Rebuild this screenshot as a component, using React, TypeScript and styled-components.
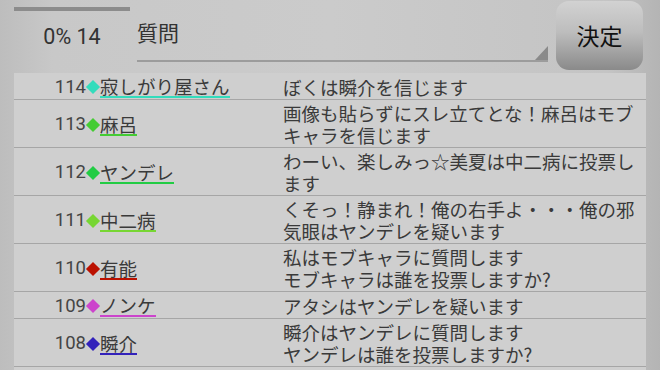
import React from 'react'
import styled, { createGlobalStyle } from 'styled-components'

const GlobalStyle = createGlobalStyle`
  html, body {
    margin: 0;
    padding: 0;
    background: #c6c6c6;
  }
  #root {
    width: 660px;
    height: 370px;
    overflow: hidden;
  }
`

const Screen = styled.div`
  width: 660px;
  height: 370px;
  overflow: hidden;
  display: flex;
  flex-direction: column;
  background: linear-gradient(to right, #bdbdbd 0%, #c8c8c8 8%, #cbcbcb 50%, #c4c4c4 92%, #b4b4b4 100%);
  font-family: "Noto Sans CJK JP", "Noto Sans", sans-serif;
  color: #3a3a3a;
`

const Header = styled.div`
  height: 73px;
  flex-shrink: 0;
  display: flex;
  align-items: flex-start;
  padding-left: 14px;
  box-sizing: border-box;
`

const Progress = styled.div`
  width: 116px;
  display: flex;
  flex-direction: column;
  align-items: center;
  padding-top: 7px;
`

const ProgressTrack = styled.div`
  width: 100%;
  height: 4px;
  background: #8c8c8c;
`

const ProgressLabel = styled.div`
  margin-top: 13px;
  font-family: Roboto, "Noto Sans", sans-serif;
  font-size: 21.5px;
  line-height: 26px;
  color: #333;
`

const QuestionField = styled.div`
  position: relative;
  margin-left: 7px;
  width: 411px;
  height: 62px;
  box-sizing: border-box;
  border-bottom: 2px solid #9c9c9c;
  padding-top: 17px;
  font-size: 21px;
  line-height: 30px;
  color: #333;
  &::after {
    content: '';
    position: absolute;
    right: 0;
    bottom: 0;
    width: 0;
    height: 0;
    border-left: 13px solid transparent;
    border-bottom: 14px solid #8a8a8a;
  }
`

const DecideButton = styled.button`
  margin-left: 8px;
  margin-top: 1px;
  width: 87px;
  height: 69px;
  border: none;
  border-radius: 13px;
  background: linear-gradient(to bottom, #d2d2d2 0%, #bdbdbd 45%, #8a8a8a 100%);
  font-family: "Noto Sans CJK JP", sans-serif;
  font-size: 23px;
  color: #111;
  padding: 0 0 2px 0;
`

const List = styled.div`
  flex: 1;
  margin: 0 14px;
  background: #cfcfcf;
  display: flex;
  flex-direction: column;
`

const Row = styled.div`
  display: grid;
  grid-template-columns: 72px 197px 1fr;
  align-items: center;
  padding: 2px 0 1px;
  border-bottom: 1px solid #a6a6a6;
`

const Num = styled.div`
  font-family: Roboto, "Noto Sans", sans-serif;
  font-size: 18.5px;
  text-align: right;
  color: #444;
  line-height: 22px;
`

const NameCell = styled.div`
  display: flex;
  align-items: center;
  padding-top: 1px;
`

const Diamond = styled.span<{ $color: string }>`
  display: inline-block;
  width: 10px;
  height: 10px;
  margin: 0 2px 0 2px;
  background: ${p => p.$color};
  transform: rotate(45deg);
`

const Name = styled.span<{ $color: string }>`
  display: inline-block;
  font-size: 18.5px;
  line-height: 20px;
  border-bottom: 2px solid ${p => p.$color};
  color: #3a3a3a;
`

const Message = styled.div`
  font-size: 18.5px;
  line-height: 22px;
  width: 360px;
  color: #3a3a3a;
  white-space: pre-line;
`

type Post = { no: number; name: string; color: string; text: string }

const posts: Post[] = [
  { no: 114, name: '寂しがり屋さん', color: '#33dcbc', text: 'ぼくは瞬介を信じます' },
  { no: 113, name: '麻呂', color: '#44cc33', text: '画像も貼らずにスレ立てとな！麻呂はモブ\nキャラを信じます' },
  { no: 112, name: 'ヤンデレ', color: '#22cc44', text: 'わーい、楽しみっ☆美夏は中二病に投票し\nます' },
  { no: 111, name: '中二病', color: '#77d633', text: 'くそっ！静まれ！俺の右手よ・・・俺の邪\n気眼はヤンデレを疑います' },
  { no: 110, name: '有能', color: '#bb1100', text: '私はモブキャラに質問します\nモブキャラは誰を投票しますか?' },
  { no: 109, name: 'ノンケ', color: '#cc44cc', text: 'アタシはヤンデレを疑います' },
  { no: 108, name: '瞬介', color: '#3322bb', text: '瞬介はヤンデレに質問します\nヤンデレは誰を投票しますか?' },
]

export default function App() {
  return (
    <>
      <GlobalStyle />
      <Screen>
        <Header>
          <Progress>
            <ProgressTrack />
            <ProgressLabel>0% 14</ProgressLabel>
          </Progress>
          <QuestionField>質問</QuestionField>
          <DecideButton>決定</DecideButton>
        </Header>
        <List>
          {posts.map(p => (
            <Row key={p.no}>
              <Num>{p.no}</Num>
              <NameCell>
                <Diamond $color={p.color} />
                <Name $color={p.color}>{p.name}</Name>
              </NameCell>
              <Message>{p.text}</Message>
            </Row>
          ))}
        </List>
      </Screen>
    </>
  )
}
